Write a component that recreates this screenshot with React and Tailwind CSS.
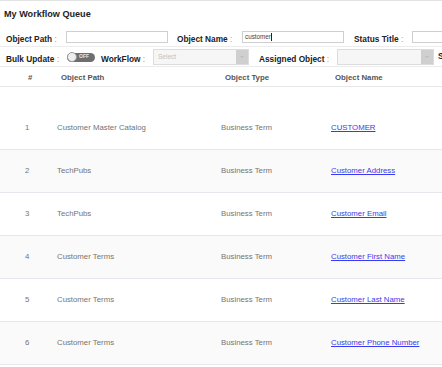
import React from "react";

const rows = [
  ["1", "Customer Master Catalog", "Business Term", "CUSTOMER"],
  ["2", "TechPubs", "Business Term", "Customer Address"],
  ["3", "TechPubs", "Business Term", "Customer Email"],
  ["4", "Customer Terms", "Business Term", "Customer First Name"],
  ["5", "Customer Terms", "Business Term", "Customer Last Name"],
  ["6", "Customer Terms", "Business Term", "Customer Phone Number"],
];

function Label({ children }) {
  return (
    <span className="text-[8.3px] font-bold text-[#222] whitespace-nowrap">
      {children}
      <span className="font-normal text-[#999]"> :</span>
    </span>
  );
}

function SelectBox({ w, placeholder }) {
  return (
    <div className={`flex h-[16px] ${w} shrink-0 items-center border border-[#dcdcdc] bg-[#f6f6f6]`}>
      <span className="flex-1 pl-[4px] text-[6.5px] text-[#c0c0c0]">{placeholder}</span>
      <div className="flex h-[14px] w-[12px] items-center justify-center bg-[#cfcfcf]">
        <div className="h-0 w-0 border-x-[2px] border-t-[2px] border-x-transparent border-t-[#bdbdbd]" />
      </div>
    </div>
  );
}

export default function App() {
  return (
    <div
      className="h-[367px] w-[442px] overflow-hidden border-t border-[#e3e3e3] bg-white"
      style={{ fontFamily: '"Liberation Sans", Arial, sans-serif' }}
    >
      <div className="flex h-[26px] items-center pl-[4px] pt-[2px] text-[9.1px] font-bold text-[#1e1e1e]">
        My Workflow Queue
      </div>

      <div className="flex h-[20px] items-center border-b border-[#ececec] pl-[6px] whitespace-nowrap">
        <div className="w-[60px] shrink-0">
          <Label>Object Path</Label>
        </div>
        <div className="mt-[1px] h-[12px] w-[102px] shrink-0 border border-[#cfcfcf] bg-white" />
        <div className="ml-[9px] w-[65px] shrink-0">
          <Label>Object Name</Label>
        </div>
        <div className="mt-[1px] flex h-[12px] w-[102px] shrink-0 items-center border border-[#cfcfcf] bg-white pl-[2px] text-[6.3px] text-[#444]">
          customer<span className="ml-[0.5px] inline-block h-[8px] w-[1px] bg-[#222]" />
        </div>
        <div className="ml-[10px] w-[58px] shrink-0">
          <Label>Status Title</Label>
        </div>
        <div className="mt-[1px] h-[12px] w-[60px] shrink-0 border border-[#cfcfcf] bg-white" />
      </div>

      <div className="flex h-[20px] items-center border-b border-[#ececec] pl-[6px] whitespace-nowrap">
        <div className="w-[61px] shrink-0">
          <Label>Bulk Update</Label>
        </div>
        <div className="relative mt-[1px] flex h-[9px] w-[28px] shrink-0 items-center rounded-full bg-[#6e6e6e]">
          <div className="absolute left-0 top-[-0.5px] h-[10px] w-[10px] rounded-full border border-[#9a9a9a] bg-[#eeeeee]" />
          <span className="ml-[12px] text-[5px] font-bold text-[#e8e8e8]">OFF</span>
        </div>
        <div className="ml-[6px] w-[52px] shrink-0">
          <Label>WorkFlow</Label>
        </div>
        <SelectBox w="w-[96px]" placeholder="Select" />
        <div className="ml-[10px] w-[78px] shrink-0">
          <Label>Assigned Object</Label>
        </div>
        <SelectBox w="w-[97px]" placeholder="" />
        <span className="ml-[4px] text-[8.3px] font-bold text-[#222]">S</span>
      </div>

      <div className="flex h-[20px] items-center border-b border-[#e8e8e8] pt-[2px] text-[7.8px] font-bold text-[#555] whitespace-nowrap">
        <div className="w-[57px] shrink-0 pl-[28px]">#</div>
        <div className="w-[164px] shrink-0 pl-[4px]">Object Path</div>
        <div className="w-[110px] shrink-0 pl-[4px]">Object Type</div>
        <div className="flex-1 pl-[4px]">Object Name</div>
      </div>

      <div className="h-[20px]" />

      {rows.map((r, i) => (
        <div
          key={r[0]}
          className={`flex h-[43px] items-center border-b border-[#e6e6ec] text-[7.8px] text-[#747474] whitespace-nowrap ${
            i % 2 === 1 ? "bg-[#fafafa]" : "bg-white"
          }`}
        >
          <div className="w-[57px] shrink-0 pl-[25px]">{r[0]}</div>
          <div className="w-[164px] shrink-0">{r[1]}</div>
          <div className="w-[110px] shrink-0">{r[2]}</div>
          <div className="flex-1">
            <span className="text-[#3a3aee] underline">{r[3]}</span>
          </div>
        </div>
      ))}
    </div>
  );
}
